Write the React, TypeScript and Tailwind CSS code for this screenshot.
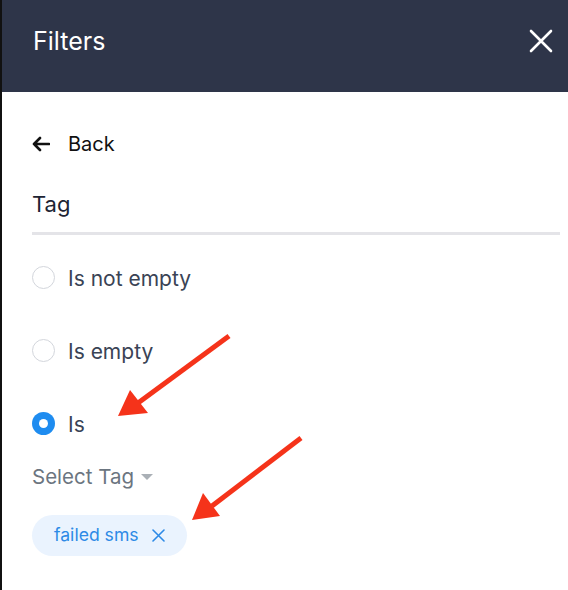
import React, { useState } from 'react';

const options = ['Is not empty', 'Is empty', 'Is'];

function Radio({ checked }: { checked: boolean }) {
    return checked ? (
        <span className="w-[23px] h-[23px] rounded-full bg-[#1e8cf0] flex items-center justify-center shrink-0">
            <span className="w-[9px] h-[9px] rounded-full bg-white"></span>
        </span>
    ) : (
        <span className="w-[23px] h-[23px] rounded-full border border-[#d3d6dc] bg-white shrink-0"></span>
    );
}

export default function App() {
    const [selected, setSelected] = useState('Is');

    return (
        <div className="relative w-[568px] h-[590px] bg-[#111] pl-[2px] font-['Inter','Liberation_Sans',sans-serif] overflow-hidden">
            <div className="h-full bg-white">

                {/* Header */}
                <div className="h-[92px] bg-[#2e3549] flex items-start justify-between pl-[31px] pr-[10px] pt-[24px]">
                    <h1 className="text-[25px] leading-[34px] text-white">Filters</h1>
                    <button className="w-[34px] h-[34px] flex items-center justify-center text-white">
                        <svg width="24" height="24" viewBox="0 0 24 24" fill="none" stroke="currentColor" strokeWidth="2.6" strokeLinecap="round">
                            <path d="M2 2L22 22M22 2L2 22" />
                        </svg>
                    </button>
                </div>

                {/* Body */}
                <div className="pl-[30px] pr-[8px] pt-[40px]">
                    <button className="flex items-center gap-[18px] h-[24px] text-[#111]">
                        <svg width="18" height="16" viewBox="0 0 18 16" fill="none" stroke="currentColor" strokeWidth="2.6" strokeLinecap="round" strokeLinejoin="round">
                            <path d="M17 8H2M8 2L2 8l6 6" />
                        </svg>
                        <span className="text-[20px]">Back</span>
                    </button>

                    <div className="mt-[34px] pb-[14px] border-b-[3px] border-[#e4e4e8]">
                        <h2 className="text-[22px] leading-[28px] text-[#1d2433]">Tag</h2>
                    </div>

                    <div className="flex flex-col gap-[49px] mt-[30px]">
                        {options.map((o) => (
                            <label key={o} className="flex items-center gap-[13px] h-[24px] cursor-pointer" onClick={() => setSelected(o)}>
                                <Radio checked={selected === o} />
                                <span className="text-[21px] leading-[24px] pt-[3px] text-[#3a4355]">{o}</span>
                            </label>
                        ))}
                    </div>

                    <div className="mt-[27px] flex items-center gap-[7px] text-[#6b7580]">
                        <span className="text-[20.5px]">Select Tag</span>
                        <svg width="12" height="8" viewBox="0 0 12 8"><path d="M0 1h12L6 7z" fill="#aab0b6" /></svg>
                    </div>

                    <div className="mt-[22px] inline-flex items-center gap-[13px] h-[41px] pl-[22px] pr-[22px] rounded-full bg-[#eaf3fe] text-[#2d8ae6]">
                        <span className="text-[17.6px]">failed sms</span>
                        <svg width="13" height="13" viewBox="0 0 13 13" stroke="currentColor" strokeWidth="1.6" strokeLinecap="round">
                            <path d="M1 1l11 11M12 1L1 12" />
                        </svg>
                    </div>
                </div>
            </div>

            {/* annotation arrows */}
            <svg className="absolute inset-0 pointer-events-none" width="568" height="590" viewBox="0 0 568 590">
                <g stroke="#f5331a" strokeWidth="5" strokeLinecap="butt">
                    <line x1="229" y1="336" x2="138" y2="403" />
                    <line x1="301" y1="438" x2="212" y2="506" />
                </g>
                <g fill="#f5331a">
                    <path d="M118 416 L130 390 L148 413 Z" />
                    <path d="M192 520 L203 493 L220 516 Z" />
                </g>
            </svg>
        </div>
    );
}
